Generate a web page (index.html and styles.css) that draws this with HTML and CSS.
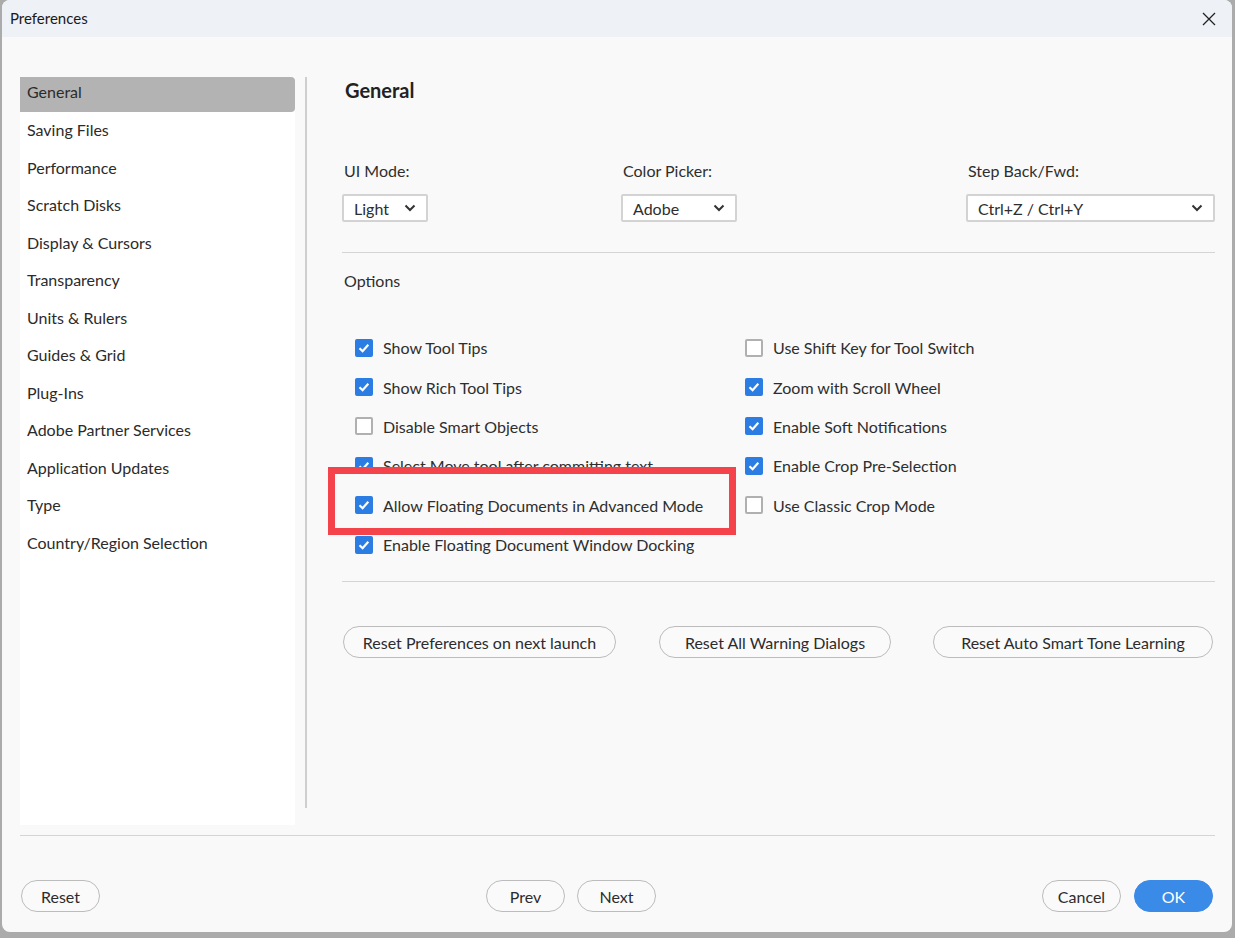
FILE: index.html
```html
<!DOCTYPE html>
<html lang="en">
<head>
  <meta charset="UTF-8">
  <title>Preferences</title>
  <link rel="stylesheet" href="styles.css">
</head>
<body>
  <div class="dialog">
    <div class="titlebar">
      <span class="title">Preferences</span>
      <svg class="close" width="14" height="14" viewBox="0 0 14 14">
        <path d="M1 1 L13 13 M13 1 L1 13" stroke="#222" stroke-width="1.3" fill="none"/>
      </svg>
    </div>

    <div class="content">
      <ul class="sidebar">
        <li class="active">General</li>
        <li>Saving Files</li>
        <li>Performance</li>
        <li>Scratch Disks</li>
        <li>Display &amp; Cursors</li>
        <li>Transparency</li>
        <li>Units &amp; Rulers</li>
        <li>Guides &amp; Grid</li>
        <li>Plug-Ins</li>
        <li>Adobe Partner Services</li>
        <li>Application Updates</li>
        <li>Type</li>
        <li>Country/Region Selection</li>
      </ul>
      <div class="vdivider"></div>

      <div class="main">
        <h2 class="heading">General</h2>

        <div class="fields">
          <div class="field">
            <label>UI Mode:</label>
            <div class="select sel-mode">
              <span>Light</span>
              <svg width="12" height="8" viewBox="0 0 12 8"><path d="M1.5 1.5 L6 6 L10.5 1.5" stroke="#333" stroke-width="2" fill="none"/></svg>
            </div>
          </div>
          <div class="field">
            <label>Color Picker:</label>
            <div class="select sel-picker">
              <span>Adobe</span>
              <svg width="12" height="8" viewBox="0 0 12 8"><path d="M1.5 1.5 L6 6 L10.5 1.5" stroke="#333" stroke-width="2" fill="none"/></svg>
            </div>
          </div>
          <div class="field">
            <label>Step Back/Fwd:</label>
            <div class="select sel-step">
              <span>Ctrl+Z / Ctrl+Y</span>
              <svg width="12" height="8" viewBox="0 0 12 8"><path d="M1.5 1.5 L6 6 L10.5 1.5" stroke="#333" stroke-width="2" fill="none"/></svg>
            </div>
          </div>
        </div>

        <div class="hr"></div>

        <div class="section-label">Options</div>

        <div class="options">
          <div class="opt"><span class="box on"></span>Show Tool Tips</div>
          <div class="opt"><span class="box on"></span>Show Rich Tool Tips</div>
          <div class="opt"><span class="box"></span>Disable Smart Objects</div>
          <div class="opt"><span class="box on"></span>Select Move tool after committing text</div>
          <div class="opt marked"><span class="box on"></span>Allow Floating Documents in Advanced Mode</div>
          <div class="opt"><span class="box on"></span>Enable Floating Document Window Docking</div>
          <div class="opt"><span class="box"></span>Use Shift Key for Tool Switch</div>
          <div class="opt"><span class="box on"></span>Zoom with Scroll Wheel</div>
          <div class="opt"><span class="box on"></span>Enable Soft Notifications</div>
          <div class="opt"><span class="box on"></span>Enable Crop Pre-Selection</div>
          <div class="opt"><span class="box"></span>Use Classic Crop Mode</div>
        </div>

        <div class="hr hr-low"></div>

        <div class="reset-row">
          <button class="pill w-prefs">Reset Preferences on next launch</button>
          <button class="pill w-warn">Reset All Warning Dialogs</button>
          <button class="pill w-tone">Reset Auto Smart Tone Learning</button>
        </div>
      </div>
    </div>

    <div class="hr footer-hr"></div>

    <div class="footer">
      <button class="pill small">Reset</button>
      <div class="nav">
        <button class="pill small">Prev</button>
        <button class="pill small">Next</button>
      </div>
      <div class="confirm">
        <button class="pill small">Cancel</button>
        <button class="pill small primary">OK</button>
      </div>
    </div>
  </div>
</body>
</html>
```

FILE: styles.css
```css
body {
  margin: 0;
  background: #ababab;
  font-family: Lato, "Open Sans", sans-serif;
  color: #2e2e2e;
  height: 938px;
  overflow: hidden;
}
.dialog {
  width: 1230px;
  height: 932px;
  margin-left: 2px;
  background: #f9f9f9;
  border-radius: 8px;
  overflow: hidden;
  display: flex;
  flex-direction: column;
}
.titlebar {
  height: 37px;
  background: #eef1f6;
  display: flex;
  align-items: center;
  justify-content: space-between;
  padding: 0 16px 0 8px;
  flex-shrink: 0;
}
.title {
  font-size: 15px;
  color: #1a1a1a;
  margin-top: -1px;
}
.close {
  display: block;
}
.content {
  display: flex;
  padding: 40px 18px 0 18px;
  height: 748px;
}
.sidebar {
  list-style: none;
  margin: 0;
  padding: 0;
  width: 275px;
  background: #fff;
  flex-shrink: 0;
}
.sidebar li {
  height: 37.5px;
  line-height: 36px;
  padding-left: 7px;
  font-size: 16px;
  color: #2b2b2b;
}
.sidebar li.active {
  background: #b3b3b3;
  border-radius: 0 4px 4px 0;
  height: 35px;
  line-height: 30px;
}
.vdivider {
  width: 2px;
  height: 731px;
  background: #cfcfcf;
  margin-left: 10px;
  flex-shrink: 0;
}
.main {
  flex: 1;
  padding-left: 35px;
}
.heading {
  margin: 0;
  font-size: 20px;
  font-weight: bold;
  line-height: 26px;
  padding-left: 3px;
  color: #222;
}
.fields {
  display: flex;
  margin-top: 58px;
}
.field {
  display: flex;
  flex-direction: column;
}
.field:nth-child(1) { width: 279px; }
.field:nth-child(2) { width: 345px; }
.field label {
  font-size: 16px;
  line-height: 20px;
  padding-left: 2px;
  margin-bottom: 13px;
}
.select {
  height: 28px;
  box-sizing: border-box;
  border: 2px solid #d3d3d3;
  border-radius: 2px;
  background: #fff;
  display: flex;
  align-items: center;
  justify-content: space-between;
  padding: 0 10px 0 10px;
  font-size: 16px;
}
.sel-mode { width: 86px; }
.sel-picker { width: 116px; }
.sel-step { width: 249px; }
.hr {
  height: 1px;
  background: #d5d5d5;
  margin-top: 30px;
}
.section-label {
  font-size: 16px;
  line-height: 20px;
  margin-top: 18px;
  padding-left: 2px;
}
.options {
  display: grid;
  grid-template-rows: repeat(6, 39.4px);
  grid-template-columns: 390px 1fr;
  grid-auto-flow: column;
  margin-top: 37px;
  padding-left: 13px;
}
.opt {
  display: flex;
  align-items: center;
  font-size: 16px;
}
.box {
  width: 18px;
  height: 18px;
  box-sizing: border-box;
  border: 2px solid #b0b0b0;
  border-radius: 2px;
  background: #fff;
  margin-right: 10px;
  flex-shrink: 0;
}
.box.on {
  border: none;
  background: #2b7de4 url("data:image/svg+xml,%3Csvg xmlns='http://www.w3.org/2000/svg' width='18' height='18' viewBox='0 0 18 18'%3E%3Cpath d='M4.5 9.3 L7.6 12.2 L13.3 5.8' stroke='white' stroke-width='2.2' fill='none'/%3E%3C/svg%3E") no-repeat center;
}
.opt.marked {
  position: relative;
  z-index: 1;
}
.opt.marked::before {
  content: "";
  position: absolute;
  left: -27px;
  top: -19px;
  width: 408px;
  height: 68px;
  box-sizing: border-box;
  border: 7px solid #f4434b;
  background: #f9f9f9;
  z-index: -1;
}
.hr-low {
  margin-top: 17px;
}
.reset-row {
  display: flex;
  margin-top: 44px;
  padding-left: 1px;
}
.pill {
  height: 32px;
  box-sizing: border-box;
  border: 1px solid #bcbcbc;
  border-radius: 16px;
  background: #fafafa;
  font-family: Lato, "Open Sans", sans-serif;
  font-size: 16px;
  color: #2c2c2c;
  padding: 0;
}
.w-prefs { width: 273px; margin-right: 43px; }
.w-warn { width: 232px; margin-right: 42px; }
.w-tone { width: 280px; }
.footer-hr {
  margin: 10px 17px 0 18px;
}
.footer {
  display: flex;
  align-items: center;
  padding: 44px 19px 0 19px;
}
.small {
  width: 79px;
}
.nav {
  display: flex;
  gap: 12px;
  margin-left: 386px;
}
.confirm {
  display: flex;
  gap: 13px;
  margin-left: auto;
}
.primary {
  background: #3a8ae8;
  border-color: #3a8ae8;
  color: #fff;
}
```
